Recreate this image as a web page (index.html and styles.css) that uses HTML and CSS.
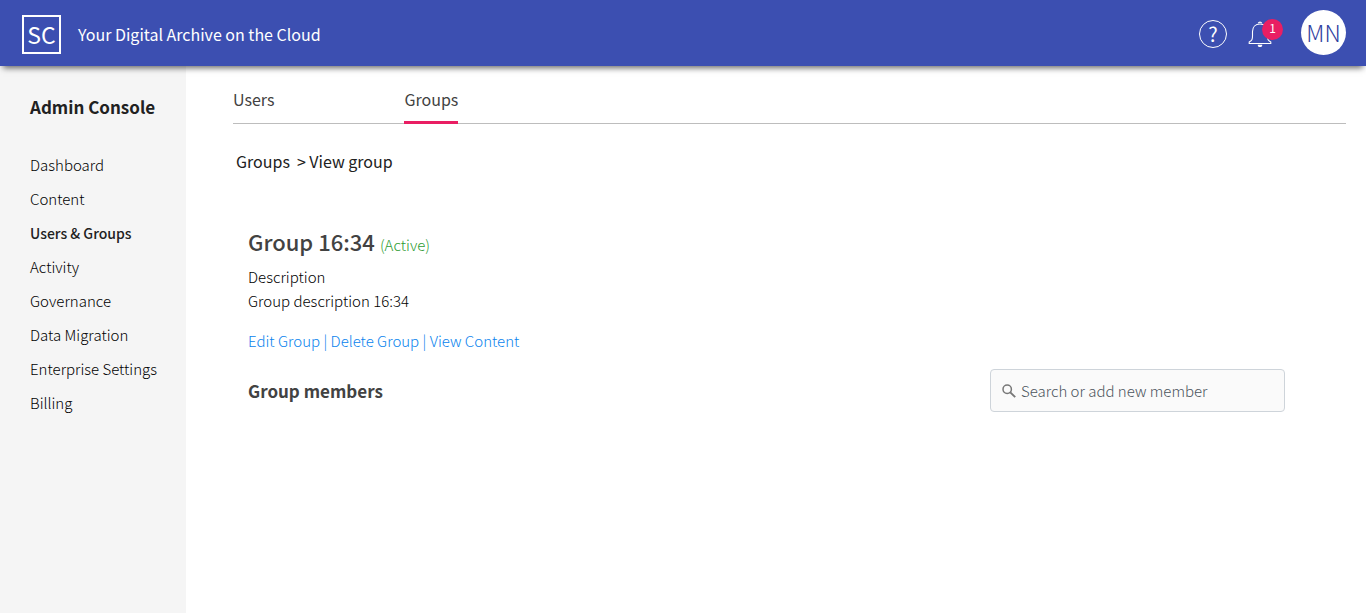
FILE: index.html
```html
<!DOCTYPE html>
<html lang="en">
<head>
<meta charset="utf-8">
<title>Admin Console - Groups</title>
<meta name="viewport" content="width=device-width, initial-scale=1">
<link rel="stylesheet" href="styles.css">
</head>
<body>
<header class="topbar">
  <a class="logo" href="#">SC</a>
  <span class="tagline">Your Digital Archive on the Cloud</span>
  <div class="actions">
    <button class="icon-button help" type="button" aria-label="Help">?</button>
    <button class="icon-button bell" type="button" aria-label="Notifications">
      <svg width="24" height="26" viewBox="0 0 24 26" fill="none" stroke="#fff" stroke-width="1.1" aria-hidden="true">
        <path d="M12 3C7.500 3 4.500 6 4.500 10.500V15C4.500 18.500 4 19.500 1.200 21V22.500H22.800V21C20 19.500 19.500 18.500 19.500 15V10.500C19.500 6 16.500 3 12 3Z"/>
        <path d="M10.300 2.300A1.800 1.800 0 0 1 13.700 2.300"/>
        <path d="M10.300 24.200H13.700A1.700 1.300 0 0 1 10.300 24.200Z" fill="#fff"/>
      </svg>
      <span class="badge">1</span>
    </button>
    <button class="avatar" type="button" aria-label="Account">MN</button>
  </div>
</header>
<div class="layout">
  <nav class="sidebar" aria-label="Admin">
    <h2 class="sidebar-title">Admin Console</h2>
    <ul class="menu">
      <li><a href="#">Dashboard</a></li>
      <li><a href="#">Content</a></li>
      <li><a class="current" href="#">Users &amp; Groups</a></li>
      <li><a href="#">Activity</a></li>
      <li><a href="#">Governance</a></li>
      <li><a href="#">Data Migration</a></li>
      <li><a href="#">Enterprise Settings</a></li>
      <li><a href="#">Billing</a></li>
    </ul>
  </nav>
  <main class="content">
    <nav class="tabs" aria-label="Sections">
      <a class="tab" href="#">Users</a>
      <a class="tab selected" href="#">Groups</a>
    </nav>
    <nav class="breadcrumb" aria-label="Breadcrumb"><a href="#">Groups</a><span>&gt; View group</span></nav>
    <section class="group">
      <div class="heading"><h1 class="name">Group 16:34</h1><span class="status">(Active)</span></div>
      <p>Description</p>
      <p>Group description 16:34</p>
      <div class="links"><a href="#">Edit Group</a> | <a href="#">Delete Group</a> | <a href="#">View Content</a></div>
      <div class="members">
        <h2 class="members-title">Group members</h2>
        <label class="search">
          <svg width="14" height="14" viewBox="0 0 14 14" fill="none" stroke="#777" stroke-width="1.5" aria-hidden="true">
            <circle cx="5.200" cy="5.200" r="4.200"/>
            <path d="M8.300 8.300L13.200 13.200" stroke-width="1.900"/>
          </svg>
          <input type="text" placeholder="Search or add new member" aria-label="Search or add new member">
        </label>
      </div>
    </section>
  </main>
</div>
</body>
</html>
```
FILE: styles.css
```css
* {
  box-sizing: border-box;
}

body {
  margin: 0;
  min-height: 100vh;
  display: flex;
  flex-direction: column;
  background: #fff;
  color: #000;
  font-family: "Noto Sans CJK SC", "Open Sans", sans-serif;
  font-size: 15px;
  font-weight: 300;
  line-height: 24px;
}

h1,
h2,
p,
ul {
  margin: 0;
  padding: 0;
}

a {
  color: inherit;
  text-decoration: none;
}

button {
  padding: 0;
  font-family: inherit;
  font-weight: inherit;
  cursor: pointer;
}

.topbar {
  position: relative;
  display: flex;
  align-items: center;
  height: 66px;
  padding: 0 20px 0 22px;
  background: #3c4fb1;
  color: #fff;
  box-shadow: 0 5px 6px -3px rgba(0, 0, 0, 0.6);
}

.logo {
  width: 39px;
  height: 39px;
  margin-top: 3px;
  border: 2px solid #fff;
  font-size: 23px;
  font-weight: 400;
  line-height: 34px;
  text-align: center;
}

.tagline {
  margin: 2px 0 0 17px;
  font-size: 16px;
  font-weight: 400;
}

.actions {
  display: flex;
  align-items: center;
  margin-left: auto;
}

.icon-button {
  border: 0;
  background: none;
  color: #fff;
}

.help {
  width: 28px;
  height: 28px;
  margin: 2px 21px 0 0;
  border: 1px solid #fff;
  border-radius: 50%;
  font-size: 20px;
  font-weight: 400;
  line-height: 24px;
}

.bell {
  position: relative;
  width: 24px;
  height: 26px;
  margin: 2px 29px 0 0;
}

.bell svg {
  display: block;
}

.badge {
  position: absolute;
  top: -2px;
  right: -11px;
  width: 21px;
  height: 21px;
  border-radius: 50%;
  background: #e91e63;
  font-size: 12px;
  font-weight: 400;
  line-height: 18px;
}

.avatar {
  width: 45px;
  height: 45px;
  margin-bottom: 2px;
  border: 0;
  border-radius: 50%;
  background: #fff;
  color: #3040a0;
  font-size: 23px;
  line-height: 44px;
}

.layout {
  flex: 1;
  display: flex;
}

.sidebar {
  flex: none;
  width: 186px;
  padding: 29px 0 0 30px;
  background: #f5f5f5;
}

.sidebar-title {
  margin-bottom: 29px;
  color: #212121;
  font-size: 17px;
  font-weight: 700;
}

.menu {
  list-style: none;
}

.menu a {
  display: block;
  line-height: 34px;
}

.menu .current {
  color: #212121;
  font-size: 14px;
  font-weight: 500;
}

.content {
  flex: 1;
  min-width: 0;
  padding: 20px 20px 0 47px;
}

.tabs {
  display: flex;
  gap: 130px;
  height: 38px;
  border-bottom: 1px solid #bdbdbd;
  color: #424242;
  font-size: 16px;
  font-weight: 400;
}

.tab {
  height: 38px;
  line-height: 26px;
}

.selected {
  border-bottom: 3px solid #e91e63;
}

.breadcrumb {
  display: flex;
  gap: 7px;
  margin: 25px 0 0 3px;
  color: #212121;
  font-size: 16px;
  font-weight: 400;
}

.group {
  margin: 53px 61px 0 15px;
}

.heading {
  display: flex;
  align-items: baseline;
  gap: 5px;
  margin-bottom: 5px;
  line-height: 30px;
}

.name {
  color: #424242;
  font-size: 22px;
  font-weight: 500;
}

.status {
  color: #2e9c33;
}

.links {
  margin-top: 16px;
  color: #0b84ee;
}

.members {
  display: flex;
  align-items: center;
  justify-content: space-between;
  margin-top: 16px;
}

.members-title {
  color: #424242;
  font-size: 17px;
  font-weight: 700;
}

.search {
  display: flex;
  align-items: center;
  gap: 5px;
  width: 295px;
  height: 43px;
  padding: 0 11px;
  border: 1px solid #ced4da;
  border-radius: 4px;
  background: #fafafa;
}

.search input {
  flex: 1;
  min-width: 0;
  padding: 0;
  border: 0;
  outline: 0;
  background: none;
  color: #424242;
  font-family: inherit;
  font-size: 15px;
  font-weight: inherit;
  line-height: 24px;
}

.search input::placeholder {
  color: #4c555d;
  opacity: 1;
}
```
